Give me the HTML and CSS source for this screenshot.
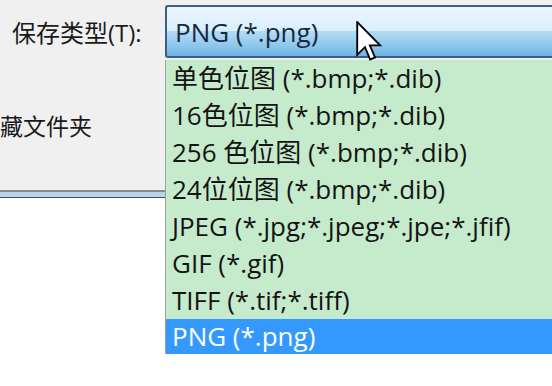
FILE: index.html
```html
<!DOCTYPE html>
<html lang="zh-CN">
<head>
<meta charset="utf-8">
<link rel="stylesheet" href="styles.css">
</head>
<body>
<div class="dialog">
  <div class="panel">
    <div class="type-row">
      <span class="label">保存类型(T):</span>
      <div class="combo"><span class="combo-text">PNG (*.png)</span></div>
    </div>
    <div class="hidden-folder">藏文件夹</div>
  </div>
  <div class="sep"></div>
  <div class="white"></div>
  <ul class="list">
    <li>单色位图 (*.bmp;*.dib)</li>
    <li>16色位图 (*.bmp;*.dib)</li>
    <li>256 色位图 (*.bmp;*.dib)</li>
    <li>24位位图 (*.bmp;*.dib)</li>
    <li>JPEG (*.jpg;*.jpeg;*.jpe;*.jfif)</li>
    <li>GIF (*.gif)</li>
    <li>TIFF (*.tif;*.tiff)</li>
    <li class="selected">PNG (*.png)</li>
  </ul>
  <svg class="cursor" width="27" height="43" viewBox="0 0 13 21">
    <path d="M0.5 0.5 L0.5 16.5 L4.3 12.8 L6.8 18.8 L9.2 17.8 L6.7 11.9 L11.7 11.9 Z" fill="#fff" stroke="#000" stroke-width="0.9" stroke-linejoin="miter"/>
  </svg>
</div>
</body>
</html>
```

FILE: styles.css
```css
html, body {
  margin: 0;
  padding: 0;
  background: #fff;
}
body {
  font-family: "Open Sans", "Noto Sans CJK SC", sans-serif;
  width: 552px;
  height: 386px;
  overflow: hidden;
}
.dialog {
  position: relative;
  width: 552px;
  height: 386px;
  overflow: hidden;
}
.panel {
  background: #f0f0f0;
  height: 190px;
  display: flex;
  flex-direction: column;
}
.type-row {
  display: flex;
  align-items: center;
  padding-top: 5px;
}
.label {
  width: 165px;
  box-sizing: border-box;
  padding-left: 12px;
  font-size: 24px;
  color: #1a1a1a;
  white-space: nowrap;
}
.combo {
  flex: 1;
  height: 53px;
  box-sizing: border-box;
  border: 2px solid #3d5e80;
  border-right: none;
  border-radius: 3px 0 0 3px;
  background: linear-gradient(#eaf6fd 0%, #d9effc 48%, #b2dcf5 50%, #8cc6ec 80%, #6db4e3 100%);
  display: flex;
  align-items: center;
  padding-left: 8px;
  margin-right: -4px;
}
.combo-text {
  font-size: 26px;
  color: #18283f;
  white-space: nowrap;
}
.hidden-folder {
  margin-top: 50px;
  font-size: 23px;
  color: #1a1a1a;
  white-space: nowrap;
}
.sep {
  height: 5px;
  width: 165px;
  background: #b8d5ef;
  border-top: 2px solid #8a8a8a;
  border-bottom: 1px solid #4b4b4b;
}
.list {
  position: absolute;
  left: 165px;
  top: 60px;
  right: 0;
  margin: 0;
  padding: 0;
  list-style: none;
  background: #c6ebcc;
  border-left: 1px solid #9aa79c;
}
.list li {
  height: 37px;
  line-height: 37px;
  padding-left: 6px;
  font-size: 26px;
  color: #141414;
  white-space: nowrap;
}
.list li.selected {
  background: #3399ff;
  color: #fff;
  height: 35px;
  line-height: 35px;
}
.cursor {
  position: absolute;
  left: 356px;
  top: 21px;
}
```
